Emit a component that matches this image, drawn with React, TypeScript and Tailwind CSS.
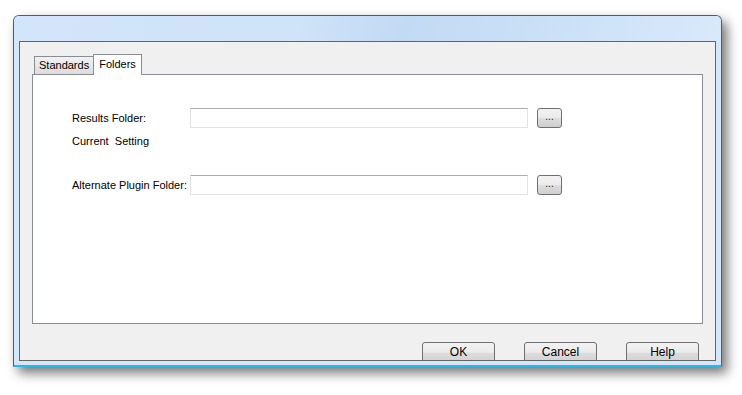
import { ReactNode } from 'react';

const font = { fontFamily: '"Liberation Sans", Arial, sans-serif' };

function BrowseButton() {
  return (
    <button className="ml-[9px] block h-[20px] w-[25px] shrink-0 rounded-[3px] border border-[#707070] bg-[linear-gradient(#f2f2f2_0%,#ebebeb_50%,#dddddd_51%,#cfcfcf_100%)] pb-[2px] text-[10px] leading-none text-[#222]">
      ...
    </button>
  );
}

function PathInput() {
  return <div className="h-[20px] w-[338px] shrink-0 border border-[#dfe3e8] border-t-[#abadb3] bg-white" />;
}

function FieldRow({ label, children }: { label: string; children?: ReactNode }) {
  return (
    <div className="flex h-[20px] items-center">
      <span className="w-[118px] shrink-0 text-[11px] leading-[13px] text-black">{label}</span>
      <PathInput />
      <BrowseButton />
      {children}
    </div>
  );
}

function DialogButton({ label }: { label: string }) {
  return (
    <button className="h-[23px] w-[73px] rounded-t-[3px] border border-[#707070] bg-[linear-gradient(#f2f2f2_0%,#ebebeb_45%,#dddddd_46%,#cfcfcf_100%)] pb-[3px] text-[12px] leading-[14px] text-black">
      {label}
    </button>
  );
}

export default function App() {
  return (
    <div className="h-[395px] w-[742px] overflow-hidden bg-white pl-[13px] pt-[15px]" style={font}>
      <div className="flex h-[352px] w-[709px] flex-col rounded-t-[6px] border border-b-2 border-[#5a5a5a] border-b-[#2ab8ec] bg-[#d4e6f9] shadow-[5px_6px_12px_rgba(0,0,0,0.55)]">
        {/* title bar */}
        <div className="h-[25px] shrink-0 rounded-t-[5px] bg-[linear-gradient(110deg,#d2e5fa_0%,#cfe3f9_40%,#c3daf4_55%,#cde2f8_80%,#d8e9fb_100%)]" />

        {/* client area */}
        <div className="mx-[5px] mb-[4px] flex min-h-0 flex-1 flex-col overflow-hidden border border-[#646464] bg-[#f0f0f0] px-[12px] pt-[12px]">
          <div className="flex shrink-0 items-end pl-[2px]">
            <div className="mb-[-1px] flex h-[19px] items-center border border-r-0 border-[#898c95] bg-[linear-gradient(#f2f2f2,#dcdcdc)] px-[4px] text-[11px] text-black">
              Standards
            </div>
            <div className="relative z-10 mb-[-1px] flex h-[21px] items-center border border-b-0 border-[#898c95] bg-white px-[5px] pb-[2px] text-[11px] text-black">
              Folders
            </div>
          </div>

          <div className="h-[250px] w-[671px] shrink-0 border border-[#898c95] bg-white pl-[39px] pt-[33px]">
            <FieldRow label="Results Folder:" />
            <div className="mt-[7px] whitespace-pre text-[11px] leading-[13px] text-black">Current  Setting</div>
            <div className="mt-[27px]">
              <FieldRow label="Alternate Plugin Folder:" />
            </div>
          </div>

          <div className="mt-[18px] flex shrink-0 justify-end gap-[29px] pr-[4px]">
            <DialogButton label="OK" />
            <DialogButton label="Cancel" />
            <DialogButton label="Help" />
          </div>
        </div>
      </div>
    </div>
  );
}
